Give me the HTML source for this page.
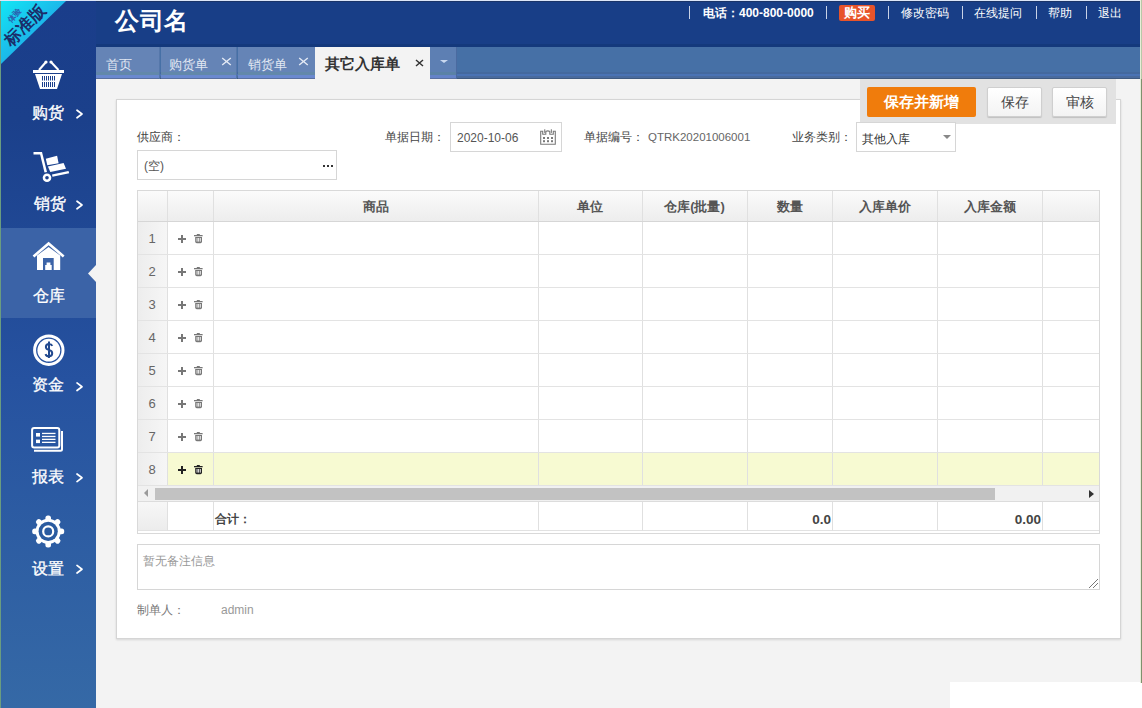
<!DOCTYPE html>
<html><head><meta charset="utf-8">
<style>
*{box-sizing:border-box;margin:0;padding:0}
html,body{width:1142px;height:708px;overflow:hidden;background:#f3f3f3;font-family:"Liberation Sans",sans-serif;font-size:12px;color:#555}
.abs{position:absolute}
#header{left:0;top:0;width:1142px;height:47px;background:linear-gradient(#183e87 0,#183e87 44px,#14397c 44px)}
#logo{left:115px;top:6px;color:#fff;font-size:24px;font-weight:bold;line-height:30px;letter-spacing:0.5px}
.hl{color:#fff;font-size:12px;line-height:14px;top:6px;white-space:nowrap}
.sep{top:6px;width:1px;height:13px;background:#c8d2e6}
#buy{left:839px;top:5px;width:36px;height:16px;background:#e8542a;border-radius:2px;color:#fff;font-weight:bold;font-size:13px;line-height:16px;text-align:center}
#side{left:0;top:0;width:96px;height:708px;background:linear-gradient(#1a3d8a 0px,#1b408b 120px,#2652a0 380px,#3569a6 708px)}
#side .edge{left:0;top:0;width:1px;height:708px;background:#6a9c80}
.nav{left:0;width:96px;height:90px}
.nav .t{position:absolute;left:32px;color:#fff;font-size:16px;line-height:18px;white-space:nowrap;-webkit-text-stroke:0.3px #fff}
.nav .ar{position:absolute;left:76px;width:7px;height:7px;border-right:2px solid #fff;border-top:2px solid #fff;transform:rotate(45deg)}
#tabbar{left:96px;top:47px;width:1046px;height:32px;background:linear-gradient(#4670a6 0,#4670a6 25px,#44699e 25px,#44699e 27px,#4a73b4 27px,#4a73b4 29px,#4a6b9e 29px,#4a6b9e 31px,#3f5a80 31px)}
.tab{top:47px;height:32px;font-size:12.5px!important;background:linear-gradient(#6584b6 0,#6584b6 25px,#6288aa 25px,#6288aa 28px,#6a89cf 28px,#6a89cf 31px,#5a70a0 31px);color:#e0e7f2;font-size:13px;line-height:16px}
.tab span{position:absolute;top:10px}
.tab .x{position:absolute;font-size:13px;top:8px;color:#eef3fb}
#tabact{left:315px;top:47px;width:115px;height:32px;background:#f3f3f3;color:#333}
#content{left:96px;top:79px;width:1046px;height:629px;background:#f3f3f3}
#panel{left:116px;top:99px;width:1005px;height:540px;background:#fff;border:1px solid #d5d5d5;box-shadow:0 1px 2px rgba(0,0,0,.12)}
#btnbox{left:860px;top:79px;width:256px;height:45px;background:#e2e2e2}
.btn{top:87px;height:30px;border-radius:2px;text-align:center;font-size:14px;line-height:30px}
#b1{left:867px;width:109px;background:#f07c0c;color:#fff;font-weight:bold;font-size:15px}
#b2,#b3{width:55px;background:linear-gradient(#fff,#f3f3f3);border:1px solid #cfcfcf;box-shadow:0 1px 1px rgba(0,0,0,.15);color:#444;line-height:28px}
#b2{left:987px}#b3{left:1052px}
.lbl{font-size:12px;color:#444;line-height:14px;white-space:nowrap}
.inp{border:1px solid #d6d6d6;background:#fff}
table.g{position:absolute;left:137px;top:190px;border-collapse:collapse;table-layout:fixed}
.g td{border:1px solid #e3e3e3;height:33px;padding:0}
.g tr.h td{height:31px;background:linear-gradient(#fafafa,#ececec);font-weight:bold;color:#555;text-align:center;font-size:13px;border-color:#dcdcdc}
.g td.n{background:linear-gradient(90deg,#efefef,#f7f7f7);text-align:center;color:#666;font-size:12px}
.g tr.sel td{background:#f8fbd4}
.g tr.sel td.n{background:linear-gradient(90deg,#efefef,#f7f7f7)}
.th{text-align:center;font-weight:bold;font-size:13px;color:#555;line-height:15px}
.rn{width:30px;text-align:center;font-size:13px;color:#666;line-height:14px}
.tf{font-weight:bold;font-size:12px;color:#444;line-height:14px}
</style></head><body>
<div id="content" class="abs"></div>
<div id="header" class="abs"></div>
<div id="logo" class="abs">公司名</div>
<div class="abs sep" style="left:689px"></div>
<div class="abs hl" style="left:703px;font-weight:bold">电话：400-800-0000</div>
<div class="abs sep" style="left:826px"></div>
<div id="buy" class="abs">购买</div>
<div class="abs sep" style="left:888px"></div>
<div class="abs hl" style="left:901px">修改密码</div>
<div class="abs sep" style="left:962px"></div>
<div class="abs hl" style="left:974px">在线提问</div>
<div class="abs sep" style="left:1036px"></div>
<div class="abs hl" style="left:1048px">帮助</div>
<div class="abs sep" style="left:1086px"></div>
<div class="abs hl" style="left:1098px">退出</div>

<div id="tabbar" class="abs"></div>
<div class="abs tab" style="left:96px;width:64px;border-right:1px solid #5577aa"><span style="left:10px">首页</span></div>
<div class="abs tab" style="left:161px;width:76px;border-right:1px solid #5577aa"><span style="left:8px">购货单</span><svg class="abs" style="left:60px;top:10px" width="11" height="9"><path d="M1.2,1 L9.8,8 M9.8,1 L1.2,8" stroke="#e4eaf5" stroke-width="1.4"/></svg></div>
<div class="abs tab" style="left:238px;width:77px"><span style="left:10px">销货单</span><svg class="abs" style="left:60px;top:10px" width="11" height="9"><path d="M1.2,1 L9.8,8 M9.8,1 L1.2,8" stroke="#e4eaf5" stroke-width="1.4"/></svg></div>
<div id="tabact" class="abs"><span class="abs" style="left:10px;top:8px;font-size:15px;font-weight:bold;line-height:17px">其它入库单</span><svg class="abs" style="left:100px;top:12px" width="9" height="8"><path d="M1,1 L8,7 M8,1 L1,7" stroke="#333" stroke-width="1.5"/></svg></div>
<div class="abs tab" style="left:430px;width:27px;background:linear-gradient(#5d7fb3 0,#5d7fb3 25px,#5a82a6 25px,#5a82a6 28px,#6483c8 28px,#6483c8 31px,#5a70a0 31px);border-right:1px solid #4a6aa0"><div class="abs" style="left:9.5px;top:12.5px;width:0;height:0;border-left:4px solid transparent;border-right:4px solid transparent;border-top:3.5px solid #c9d8f0"></div></div>

<div id="side" class="abs">
<div class="abs" style="left:0;top:228px;width:96px;height:90px;background:#3b63a7"></div>
<svg class="abs" style="left:0;top:0" width="96" height="708" viewBox="0 0 96 708">
<defs><linearGradient id="rib" x1="0" y1="0" x2="1" y2="1"><stop offset="0" stop-color="#12e6f4"/><stop offset="0.5" stop-color="#1cb8ea"/><stop offset="1" stop-color="#1f9be0"/></linearGradient></defs>
<polygon points="1,1 66,1 1,64" fill="url(#rib)"/>
<g transform="translate(24,25) rotate(-45)" fill="#1b2d6a" font-family="Liberation Sans, sans-serif">
<text x="1" y="6" font-size="16.5" font-weight="bold" text-anchor="middle">标准版</text>
<text x="0" y="-11" font-size="8" font-weight="bold" text-anchor="middle" fill="#2a62b0">体验</text>
</g>
<!-- basket -->
<g fill="#fff" stroke="none">
<line x1="39" y1="70" x2="46" y2="62" stroke="#fff" stroke-width="2"/>
<line x1="58.5" y1="70" x2="51" y2="62" stroke="#fff" stroke-width="2"/>
<circle cx="46" cy="62" r="1.6"/><circle cx="51" cy="62" r="1.6"/>
<rect x="33" y="70" width="31" height="3"/>
<polygon points="35,74 62,74 57,89 40,89"/>
</g>
<g fill="#1b3f8b"><rect x="42" y="76" width="1" height="4.5"/><rect x="44" y="76" width="1" height="4.5"/><rect x="46" y="76" width="1" height="4.5"/><rect x="48" y="76" width="1" height="4.5"/><rect x="50" y="76" width="1" height="4.5"/><rect x="52" y="76" width="1" height="4.5"/><rect x="54" y="76" width="1" height="4.5"/>
<rect x="42" y="82" width="1" height="5"/><rect x="44" y="82" width="1" height="5"/><rect x="46" y="82" width="1" height="5"/><rect x="48" y="82" width="1" height="5"/><rect x="50" y="82" width="1" height="5"/><rect x="52" y="82" width="1" height="5"/><rect x="54" y="82" width="1" height="5"/></g>
<!-- cart -->
<g fill="#fff">
<rect x="33.5" y="152" width="7" height="2.5"/>
<polygon points="39.5,152 42,152 47,172 44.5,172.5"/>
<circle cx="47" cy="177.8" r="4.3"/>
<polygon points="52,174.5 68.5,171 69.2,173.2 52.5,176.8"/>
<polygon points="45.8,158.8 57.1,155.8 58.6,163.2 47.3,165.3"/>
<polygon points="47.9,166.5 63.6,162.9 66,168.8 50.3,172.1"/>
</g>
<circle cx="47" cy="177.8" r="1.8" fill="#1b3f8b"/>
<!-- house -->
<g fill="#fff">
<polyline points="33.5,256.5 48.6,243.5 63.7,256.5" fill="none" stroke="#fff" stroke-width="2.6"/>
<polygon points="37,270 37,255.5 48.6,247 60.2,255.5 60.2,270"/>
</g>
<rect x="43" y="258" width="10.7" height="12" fill="#3b63a7"/>
<g fill="#fff"><rect x="45.2" y="265" width="6.5" height="5"/><rect x="46.6" y="262.5" width="3.8" height="3"/></g>
<!-- coin -->
<circle cx="48.8" cy="350.2" r="14.2" fill="none" stroke="#fff" stroke-width="3"/>
<circle cx="48.8" cy="350.2" r="11.4" fill="#fff"/>
<path d="M52.3,345.8 Q51.5,343.9 49,343.9 Q45.9,343.9 45.9,346.9 Q45.9,349.1 49,349.9 Q52.2,350.7 52.2,353.3 Q52.2,356.3 49,356.3 Q46.3,356.3 45.5,354.1 M49,341.6 V358" fill="none" stroke="#21498f" stroke-width="2"/>
<!-- report -->
<path d="M34,450.7 H60.5 Q62,450.7 62,449.2 V431" fill="none" stroke="#fff" stroke-width="2"/>
<rect x="32.1" y="428" width="27.2" height="19.4" rx="2" fill="none" stroke="#fff" stroke-width="2"/>
<g fill="#fff"><rect x="36" y="433" width="4" height="3.6"/><rect x="36" y="439.6" width="4" height="3.5"/>
<rect x="42" y="432.8" width="13.5" height="1.3"/><rect x="42" y="435.8" width="13.5" height="1.3"/><rect x="42" y="438.7" width="13.5" height="1.3"/><rect x="42" y="441.7" width="13.5" height="1.3"/></g>
<!-- gear -->
<g transform="translate(48.2,531.4)" fill="#fff">
<circle r="12.6"/>
<g id="teeth"><rect x="-2.8" y="-16" width="5.6" height="6" rx="2.5"/>
<rect x="-2.8" y="-16" width="5.6" height="6" rx="2.5" transform="rotate(45)"/>
<rect x="-2.8" y="-16" width="5.6" height="6" rx="2.5" transform="rotate(90)"/>
<rect x="-2.8" y="-16" width="5.6" height="6" rx="2.5" transform="rotate(135)"/>
<rect x="-2.8" y="-16" width="5.6" height="6" rx="2.5" transform="rotate(180)"/>
<rect x="-2.8" y="-16" width="5.6" height="6" rx="2.5" transform="rotate(225)"/>
<rect x="-2.8" y="-16" width="5.6" height="6" rx="2.5" transform="rotate(270)"/>
<rect x="-2.8" y="-16" width="5.6" height="6" rx="2.5" transform="rotate(315)"/></g>
<circle r="9.6" fill="#2a5ba0"/>
<circle r="5" fill="none" stroke="#fff" stroke-width="2.2"/>
</g>
<polyline points="77,110.2 82,114.0 77,117.8" fill="none" stroke="#fff" stroke-width="1.7" stroke-linecap="round" stroke-linejoin="round"/><polyline points="77,201.2 82,205.0 77,208.8" fill="none" stroke="#fff" stroke-width="1.7" stroke-linecap="round" stroke-linejoin="round"/><polyline points="77,382.9 82,386.7 77,390.5" fill="none" stroke="#fff" stroke-width="1.7" stroke-linecap="round" stroke-linejoin="round"/><polyline points="77,474.0 82,477.8 77,481.6" fill="none" stroke="#fff" stroke-width="1.7" stroke-linecap="round" stroke-linejoin="round"/><polyline points="77,565.4 82,569.2 77,573.0" fill="none" stroke="#fff" stroke-width="1.7" stroke-linecap="round" stroke-linejoin="round"/>
<!-- pointer -->
<polygon points="96,265 88,273.5 96,282" fill="#f3f3f3"/>
</svg>
<div class="abs edge"></div>
<div class="abs nav" style="top:48px"><span class="t" style="top:56px">购货</span></div>
<div class="abs nav" style="top:138px"><span class="t" style="top:57px;left:34px">销货</span></div>
<div class="abs nav" style="top:228px"><span class="t" style="top:59px;left:33px">仓库</span></div>
<div class="abs nav" style="top:318px"><span class="t" style="top:58px">资金</span></div>
<div class="abs nav" style="top:408px"><span class="t" style="top:60px">报表</span></div>
<div class="abs nav" style="top:498px"><span class="t" style="top:62px">设置</span></div>
</div>

<div id="panel" class="abs"></div>
<div id="btnbox" class="abs"></div>
<div id="b1" class="abs btn">保存并新增</div>
<div id="b2" class="abs btn">保存</div>
<div id="b3" class="abs btn">审核</div>

<div class="abs lbl" style="left:137px;top:130px">供应商：</div>
<div class="abs inp" style="left:137px;top:150px;width:200px;height:30px"><span class="abs" style="left:6px;top:7px;color:#555">(空)</span><svg class="abs" style="left:184px;top:13px" width="13" height="4"><g fill="#333"><rect x="1" y="1" width="2" height="2"/><rect x="5" y="1" width="2" height="2"/><rect x="9" y="1" width="2" height="2"/></g></svg></div>
<div class="abs lbl" style="left:385px;top:130px">单据日期：</div>
<div class="abs inp" style="left:450px;top:122px;width:112px;height:30px"><span class="abs" style="left:6px;top:8px;color:#555">2020-10-06</span><svg class="abs" style="left:87px;top:4px" width="20" height="20" viewBox="538 127 20 20"><path d="M540.7,131.2 V144.3 H555.3 V131.2 H553.3 V134.3 H549.8 V131.5 Q547.8,130.3 545.8,131.5 V134.3 H542.7 V131.2 Z" fill="none" stroke="#7a7a7a" stroke-width="1.1"/><g fill="#7a7a7a"><rect x="544.2" y="129.3" width="1.1" height="3.6"/><rect x="550.8" y="129.3" width="1.1" height="3.6"/><rect x="543" y="137" width="2" height="2"/><rect x="547" y="137" width="2" height="2"/><rect x="551" y="137" width="2" height="2"/><rect x="543" y="140.2" width="2" height="2"/><rect x="547" y="140.2" width="2" height="2"/><rect x="551" y="140.2" width="2" height="2"/></g></svg></div>
<div class="abs lbl" style="left:584px;top:130px">单据编号：</div>
<div class="abs lbl" style="left:648px;top:130px;color:#666;font-size:11.5px">QTRK20201006001</div>
<div class="abs lbl" style="left:792px;top:130px">业务类别：</div>
<div class="abs inp" style="left:856px;top:122px;width:100px;height:30px"><span class="abs" style="left:5px;top:8px;color:#333">其他入库</span><div class="abs" style="left:86px;top:12px;border-left:4px solid transparent;border-right:4px solid transparent;border-top:4px solid #888"></div></div>

<div class="abs" style="left:137px;top:190px;width:963px;height:344px;border:1px solid #d9d9d9;background:#fff"></div>
<div class="abs" style="left:138px;top:191px;width:961px;height:30px;background:linear-gradient(#fbfbfb,#ededed)"></div>
<div class="abs" style="left:138px;top:221px;width:29px;height:264px;background:linear-gradient(90deg,#ededed,#f6f6f6)"></div>
<div class="abs" style="left:168px;top:453px;width:931px;height:32px;background:#f7fad2"></div>
<div class="abs" style="left:138px;top:485px;width:961px;height:17px;background:#f1f1f1;border-bottom:1px solid #dcdcdc"></div>
<div class="abs" style="left:155px;top:488px;width:840px;height:12px;background:#c2c2c2"></div>
<div class="abs" style="left:144px;top:489px;width:0;height:0;border-top:4px solid transparent;border-bottom:4px solid transparent;border-right:4px solid #9a9a9a"></div>
<div class="abs" style="left:1089px;top:490px;width:0;height:0;border-top:4px solid transparent;border-bottom:4px solid transparent;border-left:5px solid #333"></div>
<div class="abs" style="left:138px;top:502px;width:29px;height:28px;background:linear-gradient(#f7f7f7,#ececec)"></div>
<div class="abs" style="left:138px;top:530px;width:961px;height:1px;background:#e2e2e2"></div>
<div class="abs" style="left:167px;top:191px;width:1px;height:294px;background:#e0e0e0"></div>
<div class="abs" style="left:167px;top:502px;width:1px;height:29px;background:#e0e0e0"></div>
<div class="abs" style="left:213px;top:191px;width:1px;height:294px;background:#e0e0e0"></div>
<div class="abs" style="left:213px;top:502px;width:1px;height:29px;background:#e0e0e0"></div>
<div class="abs" style="left:538px;top:191px;width:1px;height:294px;background:#e0e0e0"></div>
<div class="abs" style="left:538px;top:502px;width:1px;height:29px;background:#e0e0e0"></div>
<div class="abs" style="left:642px;top:191px;width:1px;height:294px;background:#e0e0e0"></div>
<div class="abs" style="left:642px;top:502px;width:1px;height:29px;background:#e0e0e0"></div>
<div class="abs" style="left:747px;top:191px;width:1px;height:294px;background:#e0e0e0"></div>
<div class="abs" style="left:747px;top:502px;width:1px;height:29px;background:#e0e0e0"></div>
<div class="abs" style="left:832px;top:191px;width:1px;height:294px;background:#e0e0e0"></div>
<div class="abs" style="left:832px;top:502px;width:1px;height:29px;background:#e0e0e0"></div>
<div class="abs" style="left:937px;top:191px;width:1px;height:294px;background:#e0e0e0"></div>
<div class="abs" style="left:937px;top:502px;width:1px;height:29px;background:#e0e0e0"></div>
<div class="abs" style="left:1042px;top:191px;width:1px;height:294px;background:#e0e0e0"></div>
<div class="abs" style="left:1042px;top:502px;width:1px;height:29px;background:#e0e0e0"></div>
<div class="abs" style="left:138px;top:221px;width:961px;height:1px;background:#d6d6d6"></div>
<div class="abs" style="left:138px;top:254px;width:961px;height:1px;background:#e3e3e3"></div>
<div class="abs" style="left:138px;top:287px;width:961px;height:1px;background:#e3e3e3"></div>
<div class="abs" style="left:138px;top:320px;width:961px;height:1px;background:#e3e3e3"></div>
<div class="abs" style="left:138px;top:353px;width:961px;height:1px;background:#e3e3e3"></div>
<div class="abs" style="left:138px;top:386px;width:961px;height:1px;background:#e3e3e3"></div>
<div class="abs" style="left:138px;top:419px;width:961px;height:1px;background:#e3e3e3"></div>
<div class="abs" style="left:138px;top:452px;width:961px;height:1px;background:#e3e3e3"></div>
<div class="abs" style="left:138px;top:485px;width:961px;height:1px;background:#e3e3e3"></div>
<div class="abs th" style="left:213px;width:325px;top:199px">商品</div>
<div class="abs th" style="left:538px;width:104px;top:199px">单位</div>
<div class="abs th" style="left:642px;width:105px;top:199px">仓库(批量)</div>
<div class="abs th" style="left:747px;width:85px;top:199px">数量</div>
<div class="abs th" style="left:832px;width:105px;top:199px">入库单价</div>
<div class="abs th" style="left:937px;width:105px;top:199px">入库金额</div>
<div class="abs rn" style="left:137px;top:232px">1</div>
<svg class="abs" style="left:176px;top:233px" width="30" height="12" viewBox="176 233 30 12"><g fill="#777"><rect x="178" y="238" width="8" height="2"/><rect x="181" y="235" width="2" height="8"/><rect x="194" y="235" width="8.6" height="1.3"/><rect x="196.8" y="234" width="3" height="1.2"/><path d="M195.2,237 h6.8 v4.6 q0,1.6 -1.6,1.6 h-3.6 q-1.6,0 -1.6,-1.6 z"/></g><g fill="#fff"><rect x="196.6" y="238" width="0.9" height="3.6"/><rect x="198.2" y="238" width="0.9" height="3.6"/><rect x="199.8" y="238" width="0.9" height="3.6"/></g></svg>
<div class="abs rn" style="left:137px;top:265px">2</div>
<svg class="abs" style="left:176px;top:266px" width="30" height="12" viewBox="176 266 30 12"><g fill="#777"><rect x="178" y="271" width="8" height="2"/><rect x="181" y="268" width="2" height="8"/><rect x="194" y="268" width="8.6" height="1.3"/><rect x="196.8" y="267" width="3" height="1.2"/><path d="M195.2,270 h6.8 v4.6 q0,1.6 -1.6,1.6 h-3.6 q-1.6,0 -1.6,-1.6 z"/></g><g fill="#fff"><rect x="196.6" y="271" width="0.9" height="3.6"/><rect x="198.2" y="271" width="0.9" height="3.6"/><rect x="199.8" y="271" width="0.9" height="3.6"/></g></svg>
<div class="abs rn" style="left:137px;top:298px">3</div>
<svg class="abs" style="left:176px;top:299px" width="30" height="12" viewBox="176 299 30 12"><g fill="#777"><rect x="178" y="304" width="8" height="2"/><rect x="181" y="301" width="2" height="8"/><rect x="194" y="301" width="8.6" height="1.3"/><rect x="196.8" y="300" width="3" height="1.2"/><path d="M195.2,303 h6.8 v4.6 q0,1.6 -1.6,1.6 h-3.6 q-1.6,0 -1.6,-1.6 z"/></g><g fill="#fff"><rect x="196.6" y="304" width="0.9" height="3.6"/><rect x="198.2" y="304" width="0.9" height="3.6"/><rect x="199.8" y="304" width="0.9" height="3.6"/></g></svg>
<div class="abs rn" style="left:137px;top:331px">4</div>
<svg class="abs" style="left:176px;top:332px" width="30" height="12" viewBox="176 332 30 12"><g fill="#777"><rect x="178" y="337" width="8" height="2"/><rect x="181" y="334" width="2" height="8"/><rect x="194" y="334" width="8.6" height="1.3"/><rect x="196.8" y="333" width="3" height="1.2"/><path d="M195.2,336 h6.8 v4.6 q0,1.6 -1.6,1.6 h-3.6 q-1.6,0 -1.6,-1.6 z"/></g><g fill="#fff"><rect x="196.6" y="337" width="0.9" height="3.6"/><rect x="198.2" y="337" width="0.9" height="3.6"/><rect x="199.8" y="337" width="0.9" height="3.6"/></g></svg>
<div class="abs rn" style="left:137px;top:364px">5</div>
<svg class="abs" style="left:176px;top:365px" width="30" height="12" viewBox="176 365 30 12"><g fill="#777"><rect x="178" y="370" width="8" height="2"/><rect x="181" y="367" width="2" height="8"/><rect x="194" y="367" width="8.6" height="1.3"/><rect x="196.8" y="366" width="3" height="1.2"/><path d="M195.2,369 h6.8 v4.6 q0,1.6 -1.6,1.6 h-3.6 q-1.6,0 -1.6,-1.6 z"/></g><g fill="#fff"><rect x="196.6" y="370" width="0.9" height="3.6"/><rect x="198.2" y="370" width="0.9" height="3.6"/><rect x="199.8" y="370" width="0.9" height="3.6"/></g></svg>
<div class="abs rn" style="left:137px;top:397px">6</div>
<svg class="abs" style="left:176px;top:398px" width="30" height="12" viewBox="176 398 30 12"><g fill="#777"><rect x="178" y="403" width="8" height="2"/><rect x="181" y="400" width="2" height="8"/><rect x="194" y="400" width="8.6" height="1.3"/><rect x="196.8" y="399" width="3" height="1.2"/><path d="M195.2,402 h6.8 v4.6 q0,1.6 -1.6,1.6 h-3.6 q-1.6,0 -1.6,-1.6 z"/></g><g fill="#fff"><rect x="196.6" y="403" width="0.9" height="3.6"/><rect x="198.2" y="403" width="0.9" height="3.6"/><rect x="199.8" y="403" width="0.9" height="3.6"/></g></svg>
<div class="abs rn" style="left:137px;top:430px">7</div>
<svg class="abs" style="left:176px;top:431px" width="30" height="12" viewBox="176 431 30 12"><g fill="#777"><rect x="178" y="436" width="8" height="2"/><rect x="181" y="433" width="2" height="8"/><rect x="194" y="433" width="8.6" height="1.3"/><rect x="196.8" y="432" width="3" height="1.2"/><path d="M195.2,435 h6.8 v4.6 q0,1.6 -1.6,1.6 h-3.6 q-1.6,0 -1.6,-1.6 z"/></g><g fill="#fff"><rect x="196.6" y="436" width="0.9" height="3.6"/><rect x="198.2" y="436" width="0.9" height="3.6"/><rect x="199.8" y="436" width="0.9" height="3.6"/></g></svg>
<div class="abs rn" style="left:137px;top:463px">8</div>
<svg class="abs" style="left:176px;top:464px" width="30" height="12" viewBox="176 464 30 12"><g fill="#222"><rect x="178" y="469" width="8" height="2"/><rect x="181" y="466" width="2" height="8"/><rect x="194" y="466" width="8.6" height="1.3"/><rect x="196.8" y="465" width="3" height="1.2"/><path d="M195.2,468 h6.8 v4.6 q0,1.6 -1.6,1.6 h-3.6 q-1.6,0 -1.6,-1.6 z"/></g><g fill="#fff"><rect x="196.6" y="469" width="0.9" height="3.6"/><rect x="198.2" y="469" width="0.9" height="3.6"/><rect x="199.8" y="469" width="0.9" height="3.6"/></g></svg>
<div class="abs tf" style="left:215px;top:512px">合计：</div>
<div class="abs tf" style="left:747px;width:84px;text-align:right;top:513px;font-size:13.5px">0.0</div>
<div class="abs tf" style="left:937px;width:104px;text-align:right;top:513px;font-size:13.5px">0.00</div>

<div class="abs inp" style="left:137px;top:544px;width:963px;height:46px"><span class="abs" style="left:5px;top:8px;color:#999">暂无备注信息</span><svg class="abs" style="left:948px;top:31px" width="14" height="14"><path d="M3,12 L12,3 M7,12 L12,7" stroke="#777" stroke-width="1"/></svg></div>
<div class="abs lbl" style="left:137px;top:603px;color:#777">制单人：</div>
<div class="abs lbl" style="left:221px;top:603px;color:#999">admin</div>

<div class="abs" style="left:950px;top:682px;width:192px;height:26px;background:#fff"></div>
<div class="abs" style="left:0;top:0;width:1142px;height:1px;background:#dce6f8"></div><div class="abs" style="left:96px;top:1px;width:1044px;height:1px;background:#1a3468"></div>
<div class="abs" style="left:1140px;top:0;width:1px;height:683px;background:#e6eed8"></div><div class="abs" style="left:1141px;top:0;width:1px;height:79px;background:#b8c8a8"></div><div class="abs" style="left:1141px;top:79px;width:1px;height:604px;background:#7f906e"></div>
</body></html>
